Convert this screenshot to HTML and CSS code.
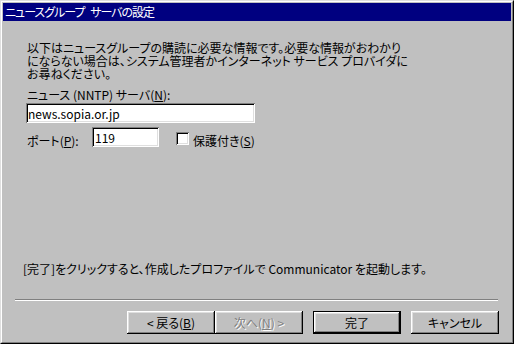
FILE: index.html
```html
<!DOCTYPE html>
<html lang="ja">
<head>
    <meta charset="UTF-8">
    <title>ニュースグループ サーバの設定</title>
    <link rel="stylesheet" href="styles.css">
</head>
<body>
    <div class="window">
        <div class="frame">
            <div class="titlebar">ニュースグループ サーバの設定</div>

            <div class="content">
                <p class="intro">以下はニュースグループの購読に必要な情報です。必要な情報がおわかり<br>にならない場合は、システム管理者かインターネット サービス プロバイダに<br>お尋ねください。</p>

                <label class="label" for="server">ニュース (NNTP) サーバ(<u>N</u>):</label>
                <input type="text" id="server" class="field server" value="news.sopia.or.jp">

                <div class="port-row">
                    <label class="label port-label" for="port">ポート(<u>P</u>):</label>
                    <input type="text" id="port" class="field port" value="119">
                    <span class="check"></span>
                    <span class="check-label">保護付き(<u>S</u>)</span>
                </div>

                <p class="note">[完了]をクリックすると、作成したプロファイルで Communicator を起動します。</p>
            </div>

            <div class="separator"></div>

            <div class="buttons">
                <button class="btn">&lt; 戻る(<u>B</u>)</button>
                <button class="btn disabled">次へ(<u>N</u>) &gt;</button>
                <button class="btn default">完了</button>
                <button class="btn">キャンセル</button>
            </div>
        </div>
    </div>
</body>
</html>
```

FILE: styles.css
```css
body {
    margin: 0;
    background-color: #c0c0c0;
    font-family: "Noto Sans CJK JP", "Liberation Sans", sans-serif;
    font-size: 12px;
    font-feature-settings: "palt";
    color: #000;
}
.window {
    width: 514px;
    height: 344px;
    box-sizing: border-box;
    border: 1px solid;
    border-color: #dfdfdf #000 #000 #dfdfdf;
}
.frame {
    height: 100%;
    box-sizing: border-box;
    border: 1px solid;
    border-color: #fff #808080 #808080 #fff;
    padding: 1px;
}
.titlebar {
    height: 18px;
    line-height: 18px;
    background-color: #000080;
    color: #fff;
    padding-left: 2px;
    letter-spacing: -1px;
    word-spacing: 4px;
}
.content {
    padding-left: 24px;
}
.intro {
    margin: 20px 0 0 0;
    line-height: 13px;
}
.label {
    display: block;
    margin-top: 8px;
    line-height: 13px;
}
.field {
    display: block;
    box-sizing: border-box;
    height: 20px;
    padding: 0 2px;
    border: none;
    background-color: #fff;
    font-family: inherit;
    font-size: 12px;
    box-shadow: inset 1px 1px #808080, inset -1px -1px #fff, inset 2px 2px #000, inset -2px -2px #dfdfdf;
}
.server {
    width: 229px;
    margin: 2px 0 0 -1px;
}
.port-row {
    display: flex;
    align-items: flex-start;
    margin-top: 4px;
}
.port-label {
    margin-top: 7px;
    width: 65px;
}
.port {
    width: 67px;
    padding-left: 3px;
}
.check {
    width: 13px;
    height: 13px;
    box-sizing: border-box;
    margin: 5px 0 0 17px;
    background-color: #fff;
    box-shadow: inset 1px 1px #808080, inset -1px -1px #fff, inset 2px 2px #000, inset -2px -2px #dfdfdf;
}
.check-label {
    margin: 7px 0 0 4px;
    line-height: 13px;
}
.note {
    margin: 115px 0 0 -4px;
    line-height: 13px;
}
.separator {
    height: 0;
    margin: 24px 13px 0 12px;
    border-top: 1px solid #808080;
    border-bottom: 1px solid #fff;
}
.buttons {
    display: flex;
    justify-content: flex-end;
    margin-top: 10px;
    padding-right: 12px;
}
.btn {
    width: 88px;
    height: 23px;
    margin-left: 10px;
    padding: 0;
    border: none;
    background-color: #c0c0c0;
    font-family: inherit;
    font-size: 12px;
    font-feature-settings: "palt";
    color: #000;
    box-shadow: inset -1px -1px #000, inset 1px 1px #fff, inset -2px -2px #808080, inset 2px 2px #dfdfdf;
}
.btn.disabled {
    margin-left: 0;
    color: #808080;
    text-shadow: 1px 1px 0 #fff;
}
.btn.default {
    box-shadow: inset 0 0 0 1px #000, inset -2px -2px #000, inset 2px 2px #fff, inset -3px -3px #808080, inset 3px 3px #dfdfdf;
}
```
